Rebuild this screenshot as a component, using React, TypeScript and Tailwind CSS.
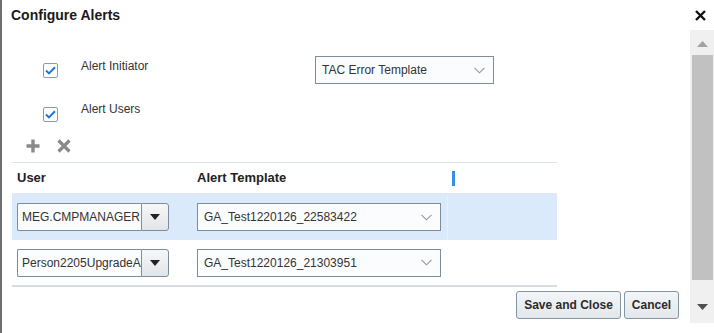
import React from 'react';

const Checkbox: React.FC = () => (
  <div className="w-[15px] h-[15px] border border-[#8e9ba6] rounded-[2px] bg-white flex items-center justify-center">
    <svg width="11" height="9" viewBox="0 0 11 9" aria-hidden="true">
      <path d="M1 4.6 L4 7.4 L10 1.2" fill="none" stroke="#1d75d8" strokeWidth="2" />
    </svg>
  </div>
);

const Chevron: React.FC = () => (
  <svg width="11" height="7" viewBox="0 0 11 7" aria-hidden="true">
    <path d="M0.5 0.8 L5.5 5.8 L10.5 0.8" fill="none" stroke="#8f9aa3" strokeWidth="1.1" />
  </svg>
);

interface SelectBoxProps {
  value: string;
  width: string;
}

const SelectBox: React.FC<SelectBoxProps> = ({ value, width }) => (
  <div className={`${width} h-[28px] border border-[#7c8e9b] bg-[#fbfcfd] flex items-center justify-between pl-[6px] pr-[8px]`}>
    <span className="text-[12px] text-[#333]">{value}</span>
    <Chevron />
  </div>
);

const UserCombo: React.FC<{ value: string }> = ({ value }) => (
  <div className="flex h-[28px] w-[152px]">
    <div className="w-[124px] h-full border border-[#7c8e9b] border-r-0 rounded-l-[2px] bg-[#fbfcfd] pl-[4px] flex items-center overflow-hidden">
      <span className="text-[12px] text-[#333] whitespace-nowrap">{value}</span>
    </div>
    <div className="w-[28px] h-full border border-[#7c8e9b] rounded-r-[3px] bg-gradient-to-b from-[#f6f7f8] to-[#e2e5e8] flex items-center justify-center">
      <svg width="10" height="6" viewBox="0 0 10 6" aria-hidden="true">
        <path d="M0 0 L10 0 L5 6 Z" fill="#222" />
      </svg>
    </div>
  </div>
);

const rows = [
  { user: 'MEG.CMPMANAGER', template: 'GA_Test1220126_22583422', selected: true },
  { user: 'Person2205UpgradeA', template: 'GA_Test1220126_21303951', selected: false }
];

export default function App() {
  return (
    <div
      className="w-[714px] h-[333px] bg-white border-l-2 border-[#6f6f6f] flex flex-col overflow-hidden"
      style={{ fontFamily: '"Liberation Sans", Arial, sans-serif' }}
    >
      {/* title bar */}
      <div className="h-[30px] flex items-center justify-between pl-[9px] pr-[8px] shrink-0">
        <span className="text-[14px] font-bold text-[#1a1a1a]">Configure Alerts</span>
        <svg width="11" height="11" viewBox="0 0 11 11" aria-hidden="true">
          <path d="M1 1 L10 10 M10 1 L1 10" stroke="#111" strokeWidth="2.4" />
        </svg>
      </div>

      <div className="flex flex-1">
        {/* content */}
        <div className="flex-1 flex flex-col">
          <div className="flex items-start pl-[41px] pt-[26px] h-[54px]">
            <div className="mt-[7px]">
              <Checkbox />
            </div>
            <span className="ml-[23px] mt-[3px] w-[234px] text-[12px] leading-[14px] text-[#333]">Alert Initiator</span>
            <SelectBox value="TAC Error Template" width="w-[179px]" />
          </div>

          <div className="flex items-start pl-[41px] mt-[18px] h-[21px]">
            <div className="mt-[5px]">
              <Checkbox />
            </div>
            <span className="ml-[23px] text-[12px] leading-[14px] text-[#333]">Alert Users</span>
          </div>

          <div className="flex items-center gap-[17px] pl-[24px] mt-[16px] h-[14px]">
            <svg width="14" height="14" viewBox="0 0 14 14" aria-hidden="true">
              <path d="M7 0.5 V13.5 M0.5 7 H13.5" stroke="#8a8a8a" strokeWidth="3.4" />
            </svg>
            <svg width="14" height="14" viewBox="0 0 14 14" aria-hidden="true">
              <path d="M1.5 1.5 L12.5 12.5 M12.5 1.5 L1.5 12.5" stroke="#8a8a8a" strokeWidth="3.2" />
            </svg>
          </div>

          {/* table */}
          <div className="ml-[10px] mt-[9px] w-[545px] border-t border-[#dde3ea] border-b-2 border-b-[#d7dce2]">
            <div className="h-[31px] flex items-center border-b border-[#e4e9ee]">
              <div className="w-[180px] pl-[5px] text-[13px] font-bold text-[#222]">User</div>
              <div className="w-[256px] pl-[5px] text-[13px] font-bold text-[#222]">Alert Template</div>
              <div className="ml-[4px] w-[3px] h-[15px] bg-[#3b8ded]" />
            </div>
            {rows.map((row) => (
              <div
                key={row.user}
                className={`flex items-center ${row.selected ? 'bg-[#dbeafb] h-[46px]' : 'bg-white h-[45px]'}`}
              >
                <div className="w-[180px] pl-[5px]">
                  <UserCombo value={row.user} />
                </div>
                <div className={`w-[256px] h-full pl-[5px] flex items-center border-r ${row.selected ? 'border-[#e6f0fb]' : 'border-white'}`}>
                  <SelectBox value={row.template} width="w-[244px]" />
                </div>
              </div>
            ))}
          </div>

          <div className="flex justify-end gap-[3px] pr-[11px] mt-[4px]">
            <button className="h-[28px] w-[105px] rounded-[3px] border border-[#8296a5] bg-gradient-to-b from-[#f3f5f7] to-[#e3e7eb] text-[12px] font-bold text-[#2b2b2b]">
              Save and Close
            </button>
            <button className="h-[28px] w-[55px] rounded-[3px] border border-[#8296a5] bg-gradient-to-b from-[#f3f5f7] to-[#e3e7eb] text-[12px] font-bold text-[#2b2b2b]">
              Cancel
            </button>
          </div>
        </div>

        {/* scrollbar */}
        <div className="w-[24px] h-[293px] bg-[#f0f0f0] flex flex-col items-center">
          <div className="h-[25px] w-full flex items-center justify-center pt-[2px]">
            <svg width="11" height="6" viewBox="0 0 11 6" aria-hidden="true">
              <path d="M0 6 L11 6 L5.5 0 Z" fill="#a3a3a3" />
            </svg>
          </div>
          <div className="w-[21px] h-[225px] bg-[#c1c1c1]" />
          <div className="flex-1 w-full flex items-center justify-center pt-[10px]">
            <svg width="11" height="6" viewBox="0 0 11 6" aria-hidden="true">
              <path d="M0 0 L11 0 L5.5 6 Z" fill="#505050" />
            </svg>
          </div>
        </div>
      </div>
    </div>
  );
}
